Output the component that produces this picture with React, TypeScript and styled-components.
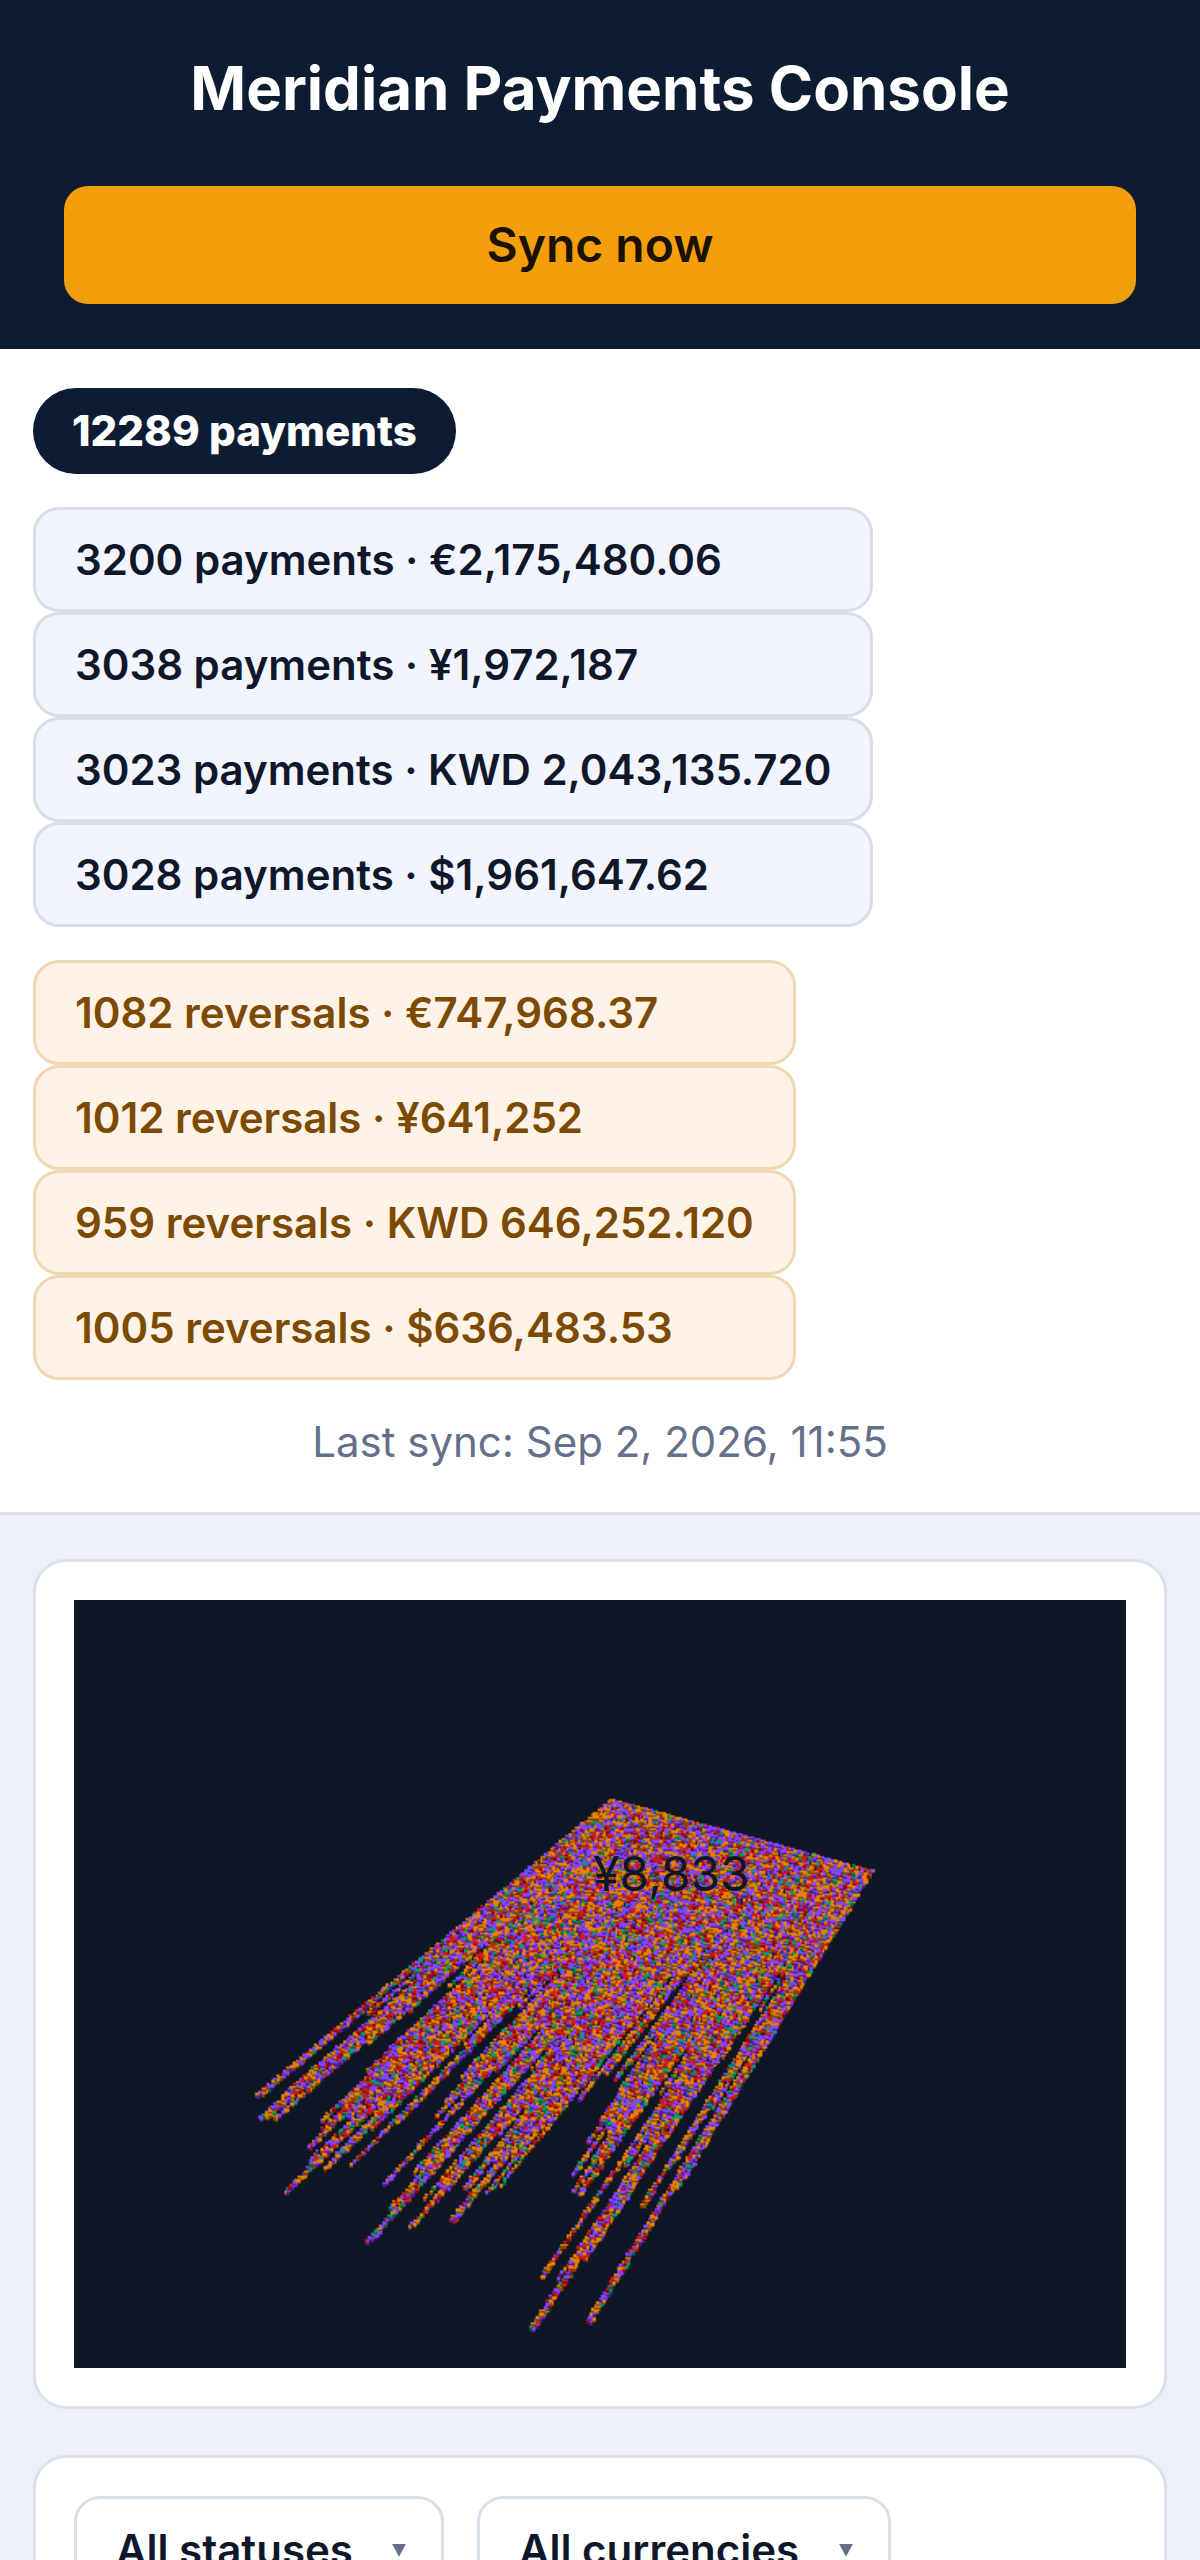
import React, { useEffect, useRef } from 'react';
import styled, { createGlobalStyle } from 'styled-components';

const GlobalStyle = createGlobalStyle`
  * { box-sizing: border-box; }
  body {
    margin: 0;
    background: #edf0f9;
    color: #0f172a;
    font-family: Inter, "Liberation Sans", sans-serif;
  }
`;

const Shell = styled.div`
  height: 100vh;
  overflow-x: hidden;
  overflow-y: auto;
  scrollbar-width: none;
`;

const Header = styled.header`
  display: flex;
  flex-direction: column;
  gap: 60px;
  padding: 50px 64px 45px;
  background: #0c1c33;
`;

const Title = styled.h1`
  margin: 0;
  color: #ffffff;
  font-size: 60px;
  font-weight: 700;
  line-height: 76px;
  text-align: center;
`;

const SyncButton = styled.button`
  padding: 30px 24px;
  border: 0;
  border-radius: 24px;
  background: #f59e0b;
  color: #1a1200;
  font: inherit;
  font-size: 48px;
  font-weight: 600;
  line-height: 58px;
`;

const Summary = styled.section`
  display: flex;
  flex-direction: column;
  align-items: flex-start;
  gap: 33px;
  padding: 39px 33px 46px;
  border-bottom: 3px solid #d8deea;
  background: #ffffff;
`;

const Total = styled.strong`
  padding: 20px 39px;
  border-radius: 43px;
  background: #0c1c33;
  color: #ffffff;
  font-size: 42px;
  font-weight: 800;
  line-height: 46px;
`;

const TotalsList = styled.ul`
  display: flex;
  flex-direction: column;
  margin: 0;
  padding: 0;
  list-style: none;
`;

const TotalsItem = styled.li<{ $reversal?: boolean }>`
  padding: 27px 39px 26px;
  border: 3px solid ${(p) => (p.$reversal ? '#f0d8b4' : '#d8deea')};
  border-radius: 26px;
  background: ${(p) => (p.$reversal ? '#fef3e6' : '#f2f5fd')};
  color: ${(p) => (p.$reversal ? '#7c4a03' : '#0f172a')};
  font-size: 42px;
  font-weight: 600;
  line-height: 46px;
`;

const LastSync = styled.p`
  align-self: center;
  margin: 5px 0 0;
  color: #64708a;
  font-size: 42px;
  line-height: 48px;
`;

const Content = styled.main`
  display: flex;
  flex-direction: column;
  gap: 46px;
  padding: 44px 33px;
`;

const Card = styled.section`
  padding: 38px;
  border: 3px solid #dbe0ec;
  border-radius: 33px;
  background: #ffffff;
`;

const Scene = styled.figure`
  position: relative;
  margin: 0;
  background: #0f1726;
`;

const SceneCanvas = styled.canvas`
  display: block;
  width: 100%;
  height: auto;
`;

const SceneLabel = styled.figcaption`
  position: absolute;
  top: 35.7%;
  left: 56.8%;
  transform: translate(-50%, -50%);
  color: #0f1726;
  font-size: 48px;
  line-height: 48px;
`;

const Filters = styled.form`
  display: flex;
  flex-wrap: wrap;
  gap: 33px;
`;

const FilterField = styled.label`
  display: grid;
  align-items: center;
  color: #64708a;
`;

const FilterSelect = styled.select`
  grid-area: 1 / 1;
  appearance: none;
  padding: 27px 88px 27px 39px;
  border: 3px solid #d8deea;
  border-radius: 26px;
  background: #ffffff;
  color: #0f172a;
  font: inherit;
  font-size: 42px;
  font-weight: 600;
  line-height: 48px;
`;

const Caret = styled.span`
  grid-area: 1 / 1;
  justify-self: end;
  margin-right: 38px;
  width: 14px;
  height: 13px;
  background: currentColor;
  clip-path: polygon(0 0, 100% 0, 50% 100%);
  pointer-events: none;
`;

const SCENE_WIDTH = 645;
const SCENE_HEIGHT = 471;

/* Bright face and shaded face of a block, by payment status. */
const FACES: [string, string, number][] = [
  ['#e68200', '#804a00', 0.39],
  ['#8443ff', '#4c208f', 0.74],
  ['#cf1a1a', '#7c0c0c', 0.91],
  ['#0a9b6b', '#07603f', 1],
];

/* Far end of each column of blocks; short columns leave the dark gaps. */
const TIPS: [number, number][] = [
  [125, 885], [375, 665], [130, 940], [145, 942], [165, 940], [380, 740],
  [560, 590], [596, 545], [375, 815], [270, 950],
  [275, 968], [240, 1020], [190, 1132], [275, 1075], [310, 1030],
  [600, 745], [340, 1058], [715, 645], [530, 930], [545, 900],
  [665, 810], [415, 1112], [425, 1175], [378, 1262], [390, 1250], [520, 1060],
  [690, 860], [470, 1225], [478, 1220], [665, 985], [595, 1120], [567, 1205],
  [640, 1140], [670, 1120], [710, 1060], [780, 950], [850, 860], [1060, 560],
  [850, 890], [930, 840], [1085, 590], [865, 1005], [835, 1085], [835, 1130],
  [848, 1140], [1030, 880], [768, 1355], [950, 1065], [860, 1315], [745, 1490],
  [1090, 910], [993, 1170], [1250, 660], [870, 1475], [1150, 910], [1080, 1132],
];

const toScene = ([px, py]: [number, number]): [number, number] => [
  (126 + px / 2.24) / 1.633,
  (160 + py / 2.613) / 1.633,
];

const FAR_LEFT = toScene([922, 106]);
const FAR_RIGHT = toScene([1506, 292]);

function rayAt(t: number) {
  const x = FAR_LEFT[0] + (FAR_RIGHT[0] - FAR_LEFT[0]) * t;
  const y = FAR_LEFT[1] + (FAR_RIGHT[1] - FAR_LEFT[1]) * t;
  const dx = -0.77 + 0.25 * t;
  const dy = 0.64 + 0.21 * t;
  const n = Math.hypot(dx, dy);
  return { x, y, dx: dx / n, dy: dy / n };
}

function locate(tip: [number, number]) {
  const [x, y] = toScene(tip);
  let lo = 0;
  let hi = 1;
  for (let i = 0; i < 30; i += 1) {
    const mid = (lo + hi) / 2;
    const r = rayAt(mid);
    if ((x - r.x) * r.dy - (y - r.y) * r.dx > 0) lo = mid;
    else hi = mid;
  }
  const r = rayAt(lo);
  return { t: lo, depth: Math.hypot(x - r.x, y - r.y) };
}

function makeRandom(seed: number) {
  let s = seed;
  return () => {
    s = (s * 1664525 + 1013904223) % 4294967296;
    return s / 4294967296;
  };
}

function drawScene(ctx: CanvasRenderingContext2D) {
  const random = makeRandom(12289);
  ctx.fillStyle = '#0f1726';
  ctx.fillRect(0, 0, SCENE_WIDTH, SCENE_HEIGHT);

  const columns = TIPS.map(locate).sort((a, b) => a.t - b.t);
  const strands = columns.filter((c) => c.depth > 130);
  for (let i = 0; i < 110; i += 1) {
    const t = i / 109;
    const nearest = columns.reduce((best, c) =>
      Math.abs(c.t - t) < Math.abs(best.t - t) ? c : best,
    );
    const beside = Math.abs(nearest.t - t) > 0.005 ? 14 + random() * 26 : 0;
    strands.push({ t, depth: nearest.depth - beside });
  }

  const blocks: { x: number; y: number; order: number }[] = [];
  strands.forEach(({ t, depth }) => {
    const r = rayAt(t);
    for (let d = 0; d <= depth; d += 2.5) {
      const x = r.x + r.dx * d + random() - 0.5;
      const y = r.y + r.dy * d;
      blocks.push({ x, y, order: y + random() * 7 });
    }
  });
  blocks.sort((a, b) => a.order - b.order);
  blocks.forEach(({ x, y }) => {
    const pick = random();
    const face = FACES.find((f) => pick <= f[2]) ?? FACES[0];
    const px = Math.round(x) - 1;
    const py = Math.round(y) - 1;
    ctx.fillStyle = face[1];
    ctx.fillRect(px, py + 1, 2, 2);
    ctx.fillStyle = face[0];
    ctx.fillRect(px, py, random() < 0.3 ? 3 : 2, random() < 0.6 ? 2 : 1);
  });
}

function PaymentsScene() {
  const ref = useRef<HTMLCanvasElement>(null);
  useEffect(() => {
    const ctx = ref.current?.getContext('2d');
    if (ctx) drawScene(ctx);
  }, []);
  return (
    <Scene>
      <SceneCanvas ref={ref} width={SCENE_WIDTH} height={SCENE_HEIGHT} />
      <SceneLabel>¥8,833</SceneLabel>
    </Scene>
  );
}

const PAYMENTS = [
  '3200 payments · €2,175,480.06',
  '3038 payments · ¥1,972,187',
  '3023 payments · KWD 2,043,135.720',
  '3028 payments · $1,961,647.62',
];

const REVERSALS = [
  '1082 reversals · €747,968.37',
  '1012 reversals · ¥641,252',
  '959 reversals · KWD 646,252.120',
  '1005 reversals · $636,483.53',
];

function Filter({ name, option }: { name: string; option: string }) {
  return (
    <FilterField htmlFor={name}>
      <FilterSelect id={name} name={name} aria-label={name}>
        <option>{option}</option>
      </FilterSelect>
      <Caret />
    </FilterField>
  );
}

export default function App() {
  return (
    <Shell>
      <GlobalStyle />
      <Header>
        <Title>Meridian Payments Console</Title>
        <SyncButton type="button">Sync now</SyncButton>
      </Header>
      <Summary>
        <Total>12289 payments</Total>
        <TotalsList>
          {PAYMENTS.map((line) => (
            <TotalsItem key={line}>{line}</TotalsItem>
          ))}
        </TotalsList>
        <TotalsList>
          {REVERSALS.map((line) => (
            <TotalsItem key={line} $reversal>{line}</TotalsItem>
          ))}
        </TotalsList>
        <LastSync>Last sync: Sep 2, 2026, 11:55</LastSync>
      </Summary>
      <Content>
        <Card>
          <PaymentsScene />
        </Card>
        <Card>
          <Filters>
            <Filter name="status" option="All statuses" />
            <Filter name="currency" option="All currencies" />
          </Filters>
        </Card>
      </Content>
    </Shell>
  );
}
